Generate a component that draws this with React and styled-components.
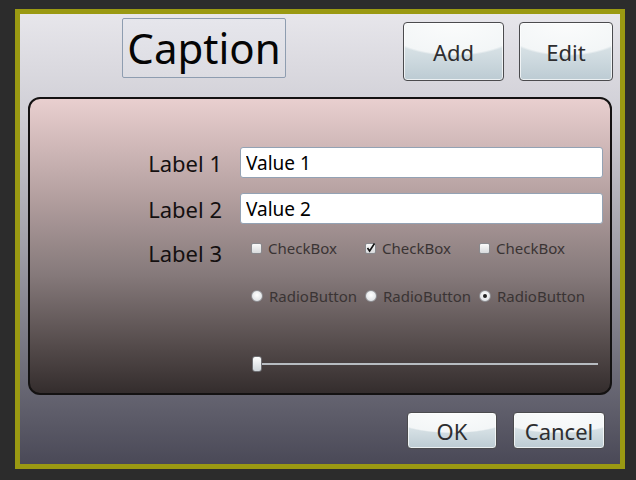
import React from "react"
import styled, { createGlobalStyle } from "styled-components"

const GlobalStyle = createGlobalStyle`
  body {
    margin: 0;
    background: #2c2c2c;
    font-family: "Noto Sans", "DejaVu Sans", sans-serif;
  }
`

const Page = styled.div`
  width: 636px;
  height: 480px;
  box-sizing: border-box;
  padding: 9px 11px 11px 15px;
  background: #2c2c2c;
`

const Frame = styled.div`
  width: 610px;
  height: 460px;
  box-sizing: border-box;
  border: 5px solid #9a9912;
  background: linear-gradient(#e7e6eb 0%, #d0cfd6 22%, #a09fa8 52%, #6d6c78 80%, #4a4957 100%);
  display: flex;
  flex-direction: column;
`

const Header = styled.div`
  display: flex;
  align-items: flex-start;
  height: 83px;
  padding-top: 4px;
  box-sizing: border-box;
`

const Caption = styled.div`
  margin-left: 102px;
  width: 164px;
  height: 60px;
  box-sizing: border-box;
  border: 1px solid #8e9db0;
  border-radius: 2px;
  background: linear-gradient(#e6e6ec, #dcdce2);
  display: flex;
  align-items: center;
  justify-content: center;
  font-size: 42px;
  color: #050505;
  line-height: 1;
`

const Button = styled.button`
  width: ${(p) => p.$w}px;
  height: ${(p) => p.$h}px;
  margin-top: ${(p) => p.$top || 0}px;
  margin-left: ${(p) => p.$left || 0}px;
  box-sizing: border-box;
  border: 1px solid #4b4b4e;
  border-radius: 4px;
  padding: 0;
  font-family: "Noto Sans", "DejaVu Sans", sans-serif;
  font-size: 22px;
  color: #2e2e30;
  background:
    radial-gradient(ellipse 75% 58% at 50% 0%, #fbfcfc 0%, #f3f6f7 94%, rgba(243, 246, 247, 0) 100%),
    linear-gradient(#e9eef0, #d2dde2 55%, #bccbd3 100%);
  box-shadow: inset 0 0 0 1px rgba(255, 255, 255, 0.7);
`

const Spacer = styled.div`
  flex: 1;
`

const Panel = styled.div`
  margin: 0 8px;
  height: 298px;
  box-sizing: border-box;
  border: 2px solid #141212;
  border-radius: 12px;
  background: linear-gradient(#e9cfcf 0%, #b9a4a4 30%, #85797a 60%, #524949 85%, #342d2d 100%);
  padding: 48px 7px 0 0;
  display: flex;
  flex-direction: column;
`

const Row = styled.div`
  display: grid;
  grid-template-columns: 192px 1fr;
  grid-template-rows: ${(p) => p.$h}px;
  column-gap: 18px;
  align-items: center;
  margin-top: ${(p) => p.$top || 0}px;
`

const Label = styled.div`
  text-align: right;
  font-size: 22px;
  line-height: 28px;
  color: #141010;
  margin: ${(p) => p.$shift || 0}px 0 ${(p) => -(p.$shift || 0)}px;
`

const Field = styled.input`
  height: 31px;
  box-sizing: border-box;
  border: 1px solid #93a2b4;
  border-radius: 3px;
  background: #fff;
  padding: 0 5px;
  font-family: "Noto Sans", "DejaVu Sans", sans-serif;
  font-size: 19px;
  color: #000;
  outline: none;
`

const Options = styled.div`
  display: flex;
  padding-left: 11px;
`

const Option = styled.label`
  width: 114px;
  display: flex;
  align-items: center;
  gap: 6px;
  font-size: 15px;
  line-height: 20px;
  color: #3a3434;
  white-space: nowrap;
`

const Box = styled.span`
  width: 11px;
  height: 11px;
  box-sizing: border-box;
  border: 1px solid #8a8a8e;
  border-radius: 2px;
  background: linear-gradient(#fafafa, #d8dadc);
  position: relative;
  flex: none;
`

const Radio = styled.span`
  width: 12px;
  height: 12px;
  box-sizing: border-box;
  border: 1px solid #8e8e92;
  border-radius: 50%;
  background: radial-gradient(circle at 50% 40%, #ffffff, #d4d8dc);
  display: flex;
  align-items: center;
  justify-content: center;
  flex: none;
  &::after {
    content: "";
    width: 4px;
    height: 4px;
    border-radius: 50%;
    background: ${(p) => (p.$on ? "#222" : "transparent")};
  }
`

const Tick = () => (
  <svg width="11" height="11" viewBox="0 0 11 11" style={{ position: "absolute", left: -1, top: -2 }}>
    <path d="M2.5 6 L4.6 9 L9.5 1.5" fill="none" stroke="#111" strokeWidth="1.6" />
  </svg>
)

const Slider = styled.div`
  position: relative;
  height: 16px;
  margin-left: 12px;
  margin-right: 5px;
  display: flex;
  align-items: center;
  &::before {
    content: "";
    flex: 1;
    height: 2px;
    background: #b7bcc1;
  }
`

const Thumb = styled.span`
  position: absolute;
  left: 0;
  top: 0;
  width: 10px;
  height: 16px;
  box-sizing: border-box;
  border: 1px solid #6e6e72;
  border-radius: 3px;
  background: linear-gradient(#ffffff, #cfd5da);
`

const Footer = styled.div`
  display: flex;
  justify-content: flex-end;
  padding: 17px 15px 0 0;
  gap: 16px;
`

const checks = [false, true, false]
const radios = [false, false, true]

export default function App() {
  return (
    <Page>
      <GlobalStyle />
      <Frame>
        <Header>
          <Caption>Caption</Caption>
          <Spacer />
          <Button $w={101} $h={59} $top={4}>Add</Button>
          <Button $w={94} $h={59} $top={4} $left={15} style={{ marginRight: 7 }}>Edit</Button>
        </Header>
        <Panel>
          <Row $h={31}>
            <Label>Label 1</Label>
            <Field defaultValue="Value 1" />
          </Row>
          <Row $h={31} $top={15}>
            <Label>Label 2</Label>
            <Field defaultValue="Value 2" />
          </Row>
          <Row $h={20} $top={14}>
            <Label $shift={5}>Label 3</Label>
            <Options>
              {checks.map((on, i) => (
                <Option key={i}>
                  <Box>{on && <Tick />}</Box>
                  CheckBox
                </Option>
              ))}
            </Options>
          </Row>
          <Row $h={20} $top={28}>
            <span />
            <Options>
              {radios.map((on, i) => (
                <Option key={i}>
                  <Radio $on={on} />
                  RadioButton
                </Option>
              ))}
            </Options>
          </Row>
          <Row $h={16} $top={50}>
            <span />
            <Slider>
              <Thumb />
            </Slider>
          </Row>
        </Panel>
        <Footer>
          <Button $w={90} $h={37}>OK</Button>
          <Button $w={92} $h={37}>Cancel</Button>
        </Footer>
      </Frame>
    </Page>
  )
}
